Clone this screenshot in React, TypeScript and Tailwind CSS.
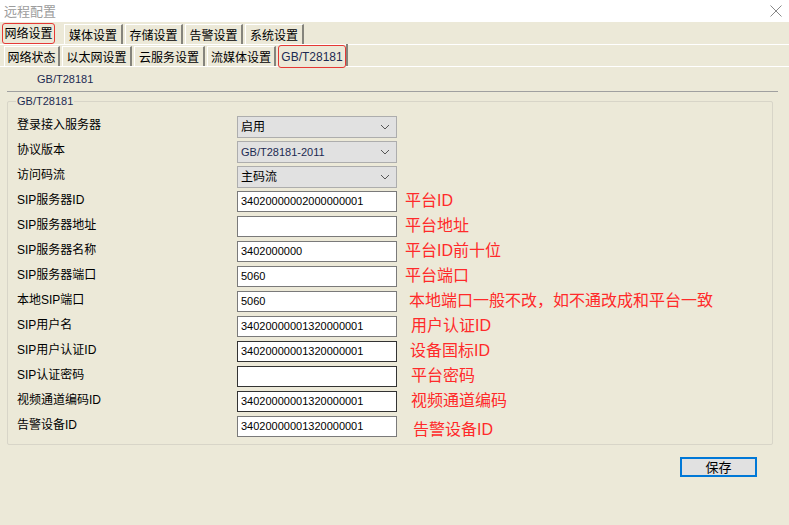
import React from "react";

const F = { fontFamily: '"Liberation Sans", "Noto Sans CJK SC", sans-serif' };

type Row = {
  label: string;
  kind: "select" | "input";
  value: string;
  note?: string;
  noteX?: number;
  dark?: boolean;
};

const rows: Row[] = [
  { label: "登录接入服务器", kind: "select", value: "启用" },
  { label: "协议版本", kind: "select", value: "GB/T28181-2011" },
  { label: "访问码流", kind: "select", value: "主码流" },
  { label: "SIP服务器ID", kind: "input", value: "34020000002000000001", note: "平台ID", noteX: 8 },
  { label: "SIP服务器地址", kind: "input", value: "", note: "平台地址", noteX: 8 },
  { label: "SIP服务器名称", kind: "input", value: "3402000000", note: "平台ID前十位", noteX: 8 },
  { label: "SIP服务器端口", kind: "input", value: "5060", note: "平台端口", noteX: 8 },
  { label: "本地SIP端口", kind: "input", value: "5060", note: "本地端口一般不改，如不通改成和平台一致", noteX: 12 },
  { label: "SIP用户名", kind: "input", value: "34020000001320000001", note: "用户认证ID", noteX: 14 },
  { label: "SIP用户认证ID", kind: "input", value: "34020000001320000001", note: "设备国标ID", noteX: 13, dark: true },
  { label: "SIP认证密码", kind: "input", value: "", note: "平台密码", noteX: 14, dark: true },
  { label: "视频通道编码ID", kind: "input", value: "34020000001320000001", note: "视频通道编码", noteX: 14, dark: true },
  { label: "告警设备ID", kind: "input", value: "34020000001320000001", note: "告警设备ID", noteX: 16 },
];

function Chevron() {
  return (
    <svg width="10" height="6" viewBox="0 0 10 6" className="shrink-0">
      <path d="M1 1 L5 5 L9 1" fill="none" stroke="#555" strokeWidth="1" />
    </svg>
  );
}

function Tab({ children, selected, w }: { children: React.ReactNode; selected?: boolean; w: number }) {
  if (selected) {
    return (
      <div
        className="h-[21px] flex items-center justify-center border border-[#e53935] rounded-[3px] text-[12px] leading-none whitespace-nowrap text-black shrink-0"
        style={{ width: w }}
      >
        {children}
      </div>
    );
  }
  return (
    <div
      className="h-[20px] flex items-center justify-center border-l border-t border-white border-r-2 border-r-[#85847c] text-[12px] leading-none whitespace-nowrap text-black shrink-0 pt-[2px]"
      style={{ width: w }}
    >
      {children}
    </div>
  );
}

export default function App() {
  return (
    <div className="w-[789px] h-[525px] flex flex-col overflow-hidden" style={F}>
      <div className="h-[22px] bg-white flex items-center justify-between pl-[4px] pr-[7px] shrink-0">
        <span className="text-[13px] leading-none text-[#9c9c9c]">远程配置</span>
        <svg width="12" height="12" viewBox="0 0 12 12">
          <path d="M0.5 0.5 L11.5 11.5 M11.5 0.5 L0.5 11.5" stroke="#888" strokeWidth="1" />
        </svg>
      </div>
      <div className="flex-1 bg-[#ece9d8] flex flex-col">
        <div className="h-[23px] border-b border-white flex items-end pl-[2px] gap-[2px]">
          <Tab selected w={53}>网络设置</Tab>
          <div className="w-[5px]" />
          <Tab w={59}>媒体设置</Tab>
          <Tab w={58}>存储设置</Tab>
          <Tab w={58}>告警设置</Tab>
          <Tab w={59}>系统设置</Tab>
        </div>
        <div className="h-[22px] border-b border-white flex items-end pl-[4px] gap-[2px]">
          <Tab w={56}>网络状态</Tab>
          <Tab w={70}>以太网设置</Tab>
          <Tab w={71}>云服务设置</Tab>
          <Tab w={69}>流媒体设置</Tab>
          <div className="flex items-end">
            <div className="h-[23px] w-[68px] flex items-center justify-center border border-[#e53935] rounded-[3px] text-[12px] leading-none text-[#1c2a52] mb-[-2px] bg-[#ece9d8]">
              GB/T28181
            </div>
            <div className="w-[2px] h-[22px] bg-[#85847c]" />
          </div>
        </div>
        <div className="h-[24px] pl-[37px] pt-[5px] text-[11px] text-[#1c2a52] leading-[14px]">GB/T28181</div>
        <div className="h-px bg-[#a0a0a0] ml-[7px] w-[771px]" />
        <div className="relative mt-[9px] ml-[7px] w-[766px] h-[344px] border border-[#d8d5c8] rounded-[2px] pt-[14px]">
          <div className="absolute -top-[7px] left-[8px] bg-[#ece9d8] px-[1px] text-[11px] leading-[13px] text-[#1c2a52]">
            GB/T28181
          </div>
          {rows.map((r) => (
            <div key={r.label} className="h-[25px] flex items-start">
              <div className="w-[229px] pl-[9px] text-[12px] leading-[16px] text-black pt-[1px]">{r.label}</div>
              {r.kind === "select" ? (
                <div className="w-[160px] h-[22px] bg-[#e1e1e1] border border-[#adadad] flex items-center justify-between pl-[3px] pr-[6px]">
                  <span className={r.value.startsWith("GB") ? "text-[11px] text-[#1c2a52]" : "text-[12px] text-black"}>{r.value}</span>
                  <Chevron />
                </div>
              ) : (
                <div
                  className={
                    "w-[160px] h-[21px] bg-white border flex items-center pl-[3px] text-[11px] text-black " +
                    (r.dark ? "border-[#333333]" : "border-[#7a7a7a]")
                  }
                >
                  {r.value}
                </div>
              )}
              {r.note && (
                <div
                  className="text-[16px] leading-[20px] text-[#ff2a2a] whitespace-nowrap"
                  style={{ marginLeft: r.noteX, marginTop: r.label === "告警设备ID" ? 4 : 0 }}
                >
                  {r.note}
                </div>
              )}
            </div>
          ))}
        </div>
        <div className="mt-[12px] ml-[680px] w-[77px] h-[20px] bg-[#e1e1e1] border-2 border-[#0078d7] flex items-center justify-center text-[13px] leading-none text-black">
          保存
        </div>
      </div>
    </div>
  );
}
